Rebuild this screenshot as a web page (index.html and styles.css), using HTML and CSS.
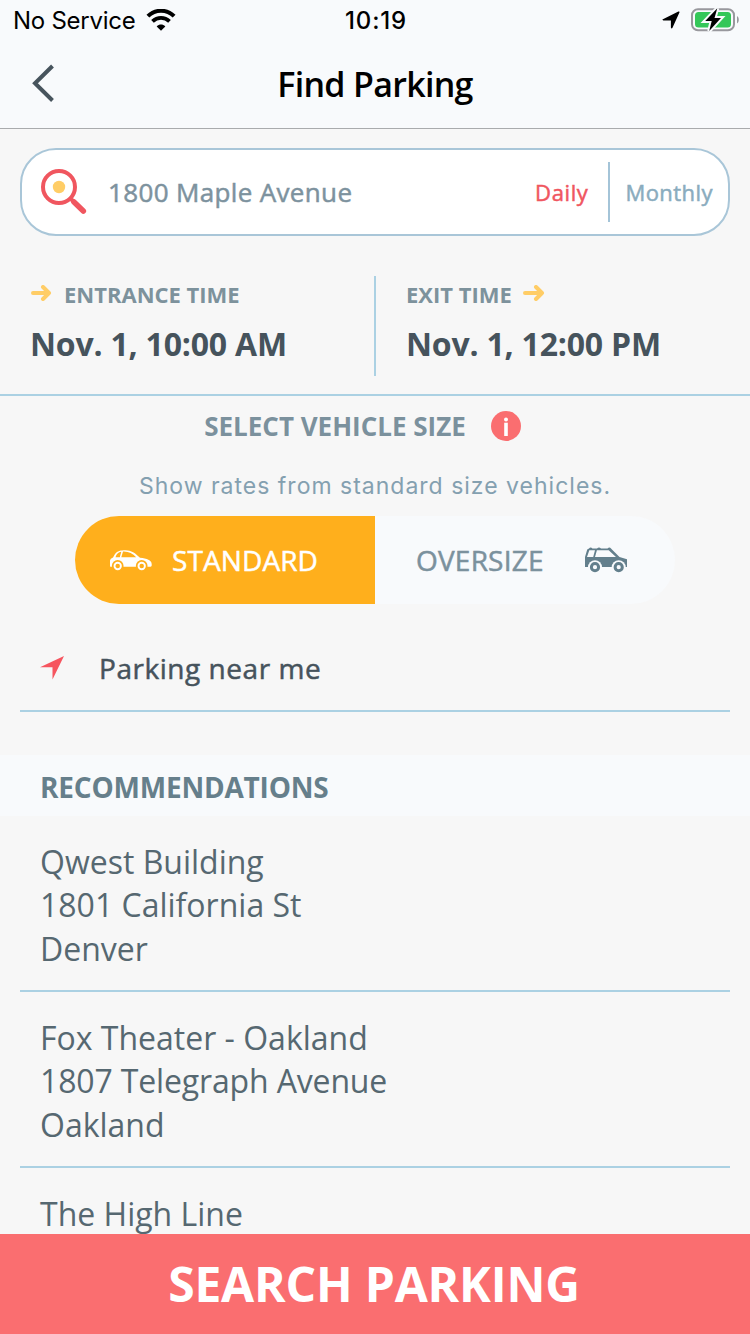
FILE: index.html
```html
<!DOCTYPE html>
<html lang="en">
<head>
<meta charset="utf-8">
<title>Find Parking</title>
<link rel="stylesheet" href="styles.css">
</head>
<body>
<div class="screen">
  <header class="header">
    <div class="status">
      <div class="status-left"><span class="carrier">No Service</span>
        <svg class="wifi" width="30" height="22" viewBox="0 0 30 22"><path d="M1.900 7.200C9.200-.1 20.800-.1 28.100 7.200" fill="none" stroke="#000" stroke-width="4"/><path d="M6.500 12.400c4.800-4.600 12.200-4.600 17 0" fill="none" stroke="#000" stroke-width="3.800"/><path d="M15 21.700l-4.300-4.300c2.500-2.400 6.100-2.400 8.600 0z"/></svg>
      </div>
      <span class="clock">10:19</span>
      <div class="status-right">
        <svg width="18" height="18" viewBox="0 0 18 18"><path d="M.9 8.200L16.400.5q1.500-.5 1 1L10.500 16.800q-1 1.300-1.600-.3V9.400H1.400q-1.700-.3-.5-1.200z"/></svg>
        <svg class="battery" width="48" height="24" viewBox="0 0 48 24"><rect x="1" y="1.200" width="42" height="21" rx="6" fill="none" stroke="#98989d" stroke-width="2"/><rect x="4" y="4" width="36" height="15.500" rx="3.500" fill="#34c759"/><path d="M46 8v7.500c2.400-1.500 2.400-6 0-7.500z" fill="#98989d"/><path d="M26.300.3L14.200 13h6.500l-2.500 10L30 10h-6.500z" fill="#000" stroke="#f8fafc" stroke-width="4"/><path d="M26.300.3L14.200 13h6.500l-2.500 10L30 10h-6.500z"/></svg>
      </div>
    </div>
    <div class="nav">
      <svg class="back" width="24" height="40" viewBox="0 0 24 40"><path d="M21.500 2L4 19.300 21.500 36.500" fill="none" stroke="#47545d" stroke-width="4"/></svg>
      <h1 class="title">Find Parking</h1>
    </div>
  </header>

  <div class="search">
    <svg class="lens" width="48" height="48" viewBox="0 0 48 48"><circle cx="19" cy="19" r="16" fill="none" stroke="#f0565f" stroke-width="4"/><circle cx="19" cy="19" r="6.200" fill="#ffcd66"/><path d="M31 31l3 3" stroke="#f0565f" stroke-width="4"/><path d="M34 34l9.300 9" stroke="#f0565f" stroke-width="5.600" stroke-linecap="round"/></svg>
    <span class="address">1800 Maple Avenue</span>
    <span class="daily">Daily</span>
    <span class="monthly">Monthly</span>
  </div>

  <section class="times">
    <div class="time">
      <div class="time-label"><svg class="arrow" width="22" height="16" viewBox="0 0 22 16"><path d="M3 8h16M13 2l6 6-6 6" fill="none" stroke="#ffcd66" stroke-width="4" stroke-linecap="round" stroke-linejoin="round"/></svg><span>ENTRANCE TIME</span></div>
      <div><span class="time-value">Nov. 1, 10:00 AM</span></div>
    </div>
    <div class="time time-exit">
      <div class="time-label"><span>EXIT TIME</span><svg class="arrow arrow-exit" width="22" height="16" viewBox="0 0 22 16"><path d="M2 8h17M13 2l6 6-6 6" fill="none" stroke="#ffcd66" stroke-width="4" stroke-linecap="round" stroke-linejoin="round"/></svg></div>
      <div><span class="time-value">Nov. 1, 12:00 PM</span></div>
    </div>
  </section>

  <section class="vehicle">
    <div class="vehicle-head"><span>SELECT VEHICLE SIZE</span><svg width="30" height="30" viewBox="0 0 30 30"><circle cx="15" cy="15" r="15" fill="#fa6e70"/><rect x="13.200" y="11.700" width="3.600" height="13.300" fill="#fff"/><circle cx="15" cy="8.500" r="2" fill="#fff"/></svg></div>
    <p class="hint"><span>Show rates from standard size vehicles.</span></p>
    <div class="toggle">
      <div class="option standard">
        <svg width="42" height="21" viewBox="0 0 42 21"><path fill="#fff" d="M0 16.500V10.500q.2-2.200 3-3L5 4C7.500.8 10.500.2 15.500.2 21 .2 25.500 3 30 7.800c7 .6 11.500 2.400 11.700 6.200v1.500q-.2 1.300-1.500 1.300H.8z"/><path fill="#ffaf1c" d="M5.500 7.300C6.800 3.300 8.500 2.200 11.300 1.700L9.800 7.300zM11.300 7.300l1.700-5.700c5.500-.3 9.500 2 13.200 5.700z"/><circle cx="7.700" cy="16" r="5.900" fill="#ffaf1c"/><circle cx="31.700" cy="16" r="5.900" fill="#ffaf1c"/><circle cx="7.700" cy="16" r="3.200" fill="none" stroke="#fff" stroke-width="1.900"/><circle cx="31.700" cy="16" r="3.200" fill="none" stroke="#fff" stroke-width="1.900"/></svg>
        <span class="standard-text">STANDARD</span>
      </div>
      <div class="option oversize">
        <span class="oversize-text">OVERSIZE</span>
        <svg width="42" height="26" viewBox="0 0 42 26"><path fill="#637f8c" d="M0 19V10L2.200 2.500 4 1.500Q5.500-.5 7.500 1.500H12q2-2 4 0h6.500q2-2 3.500 0l1.200 1.200L34.500 10 42 12.200V20H0z"/><path fill="#f8fafc" d="M2 10L4.300 3.200H10L8.200 10zM10 10l1.900-6.800h11.800L31 10z"/><circle cx="10" cy="20.200" r="7" fill="#f8fafc"/><circle cx="33.700" cy="20.200" r="7" fill="#f8fafc"/><circle cx="10" cy="20.200" r="3.600" fill="none" stroke="#637f8c" stroke-width="3"/><circle cx="33.700" cy="20.200" r="3.600" fill="none" stroke="#637f8c" stroke-width="3"/></svg>
      </div>
    </div>
  </section>

  <div class="near"><svg width="24" height="24" viewBox="0 0 24 24"><path d="M0 11.300L24 0 12.500 23.500V11.300z" fill="#f6555f"/></svg><span class="near-text">Parking near me</span></div>

  <h2 class="rec-head"><span>RECOMMENDATIONS</span></h2>
  <ul class="list">
    <li class="item"><span>Qwest Building</span><span>1801 California St</span><span>Denver</span></li>
    <li class="item"><span>Fox Theater - Oakland</span><span class="tight">1807 Telegraph Avenue</span><span>Oakland</span></li>
    <li class="item"><span>The High Line</span></li>
  </ul>
  <button class="submit"><span>SEARCH PARKING</span></button>
</div>
</body>
</html>
```

FILE: styles.css
```css
* { box-sizing: border-box; }
body { margin: 0; font-family: "Open Sans", "Noto Sans", sans-serif; }
.screen { width: 750px; height: 1334px; overflow: hidden; display: flex; flex-direction: column; background: #f7f7f7; }
.screen > * { flex-shrink: 0; }
svg { display: block; flex-shrink: 0; }
span { white-space: nowrap; }

.header { height: 129px; background: #f8fafc; border-bottom: 1px solid #a9abad; }
.status { height: 40px; display: grid; grid-template-columns: 1fr auto 1fr; align-items: center; padding: 0 11px 0 13px; font-family: Inter, sans-serif; font-size: 24px; color: #000; }
.status-left { display: flex; align-items: center; gap: 10px; }
.carrier { letter-spacing: -0.25px; }
.clock { font-weight: 500; letter-spacing: 0.8px; }
.status-right { display: flex; justify-content: flex-end; align-items: center; gap: 11px; }
.nav { height: 88px; display: grid; grid-template-columns: 60px 1fr 60px; align-items: center; padding: 0 31px; }
.title { margin: 0; text-align: center; font-size: 34px; font-weight: 600; line-height: 46px; letter-spacing: -0.7px; color: #000; }

/* Medium weight: regular glyphs thickened by a hairline stroke */
.address, .daily, .monthly, .standard-text, .oversize-text, .near-text { -webkit-text-stroke: 0.5px currentColor; }

.search { height: 88px; margin: 19px 20px 0; display: flex; align-items: center; border: 2px solid #a9c6d8; border-radius: 36px; background: #fff; padding-left: 18px; }
.address { flex: 1; margin-left: 20px; font-size: 26px; letter-spacing: 0.35px; color: #7d929e; }
.daily { font-size: 22px; letter-spacing: 0.6px; color: #f0565f; padding-right: 20px; }
.monthly { height: 60px; line-height: 60px; border-left: 2px solid #a4c4d8; font-size: 22px; letter-spacing: 0.45px; color: #8aacbe; padding: 0 15px 0 15px; }

.times { height: 160px; display: flex; padding-top: 40px; border-bottom: 2px solid #abd1e3; }
.time { width: 374px; height: 100px; padding-left: 30px; }
.time-exit { border-left: 2px solid #abd1e3; }
.time-label { display: flex; align-items: center; height: 38px; gap: 12px; font-size: 22px; line-height: 30px; font-weight: 700; color: #7d929c; }
.time-label span { margin-bottom: 2px; }
.arrow { margin-bottom: 4px; }
.arrow-exit { margin-left: -1px; }
.time-value { font-size: 32px; font-weight: 700; line-height: 60px; letter-spacing: -0.2px; color: #46535c; }

.vehicle { height: 208px; display: flex; flex-direction: column; align-items: center; }
.vehicle-head { height: 60px; display: flex; align-items: center; gap: 25px; padding-right: 25px; color: #7b919d; font-size: 26px; font-weight: 700; }
.hint { height: 60px; line-height: 60px; margin: 0; font-family: Inter, sans-serif; font-size: 23px; font-weight: 400; color: #84a0b0; letter-spacing: 1px; }
.toggle { height: 88px; width: 600px; display: flex; border-radius: 44px; overflow: hidden; background: #f8fafc; font-size: 28px; }
.option { width: 300px; height: 88px; display: flex; align-items: center; }
.standard { background: #ffaf1c; color: #fff; padding-left: 35px; gap: 20px; }
.oversize { color: #7b919d; padding-left: 41px; gap: 41px; }
.standard-text { letter-spacing: 0.1px; }
.oversize-text { letter-spacing: 0.2px; }

.near { height: 108px; margin: 0 20px; display: flex; align-items: center; gap: 35px; padding: 22px 20px 0; border-bottom: 2px solid #abd1e3; font-size: 28px; letter-spacing: 0.54px; color: #46535c; }
.rec-head { height: 61px; margin: 43px 0 0; padding-left: 40px; line-height: 64px; background: #f8fafc; color: #667f8b; font-size: 28px; font-weight: 700; letter-spacing: -0.2px; }
.list { list-style: none; margin: 0 20px; padding: 0; height: 418px; overflow: hidden; }
.item { height: 176px; display: flex; flex-direction: column; align-items: flex-start; padding: 23.500px 20px 0; border-bottom: 2px solid #abd1e3; font-size: 32px; line-height: 43.600px; color: #566871; }
.tight { letter-spacing: -0.15px; }
.submit { height: 100px; width: 750px; border: 0; padding: 0 2px 0 0; background: #fa6e70; color: #fff; font: 700 48px/100px "Open Sans", sans-serif; letter-spacing: -0.2px; }
```
